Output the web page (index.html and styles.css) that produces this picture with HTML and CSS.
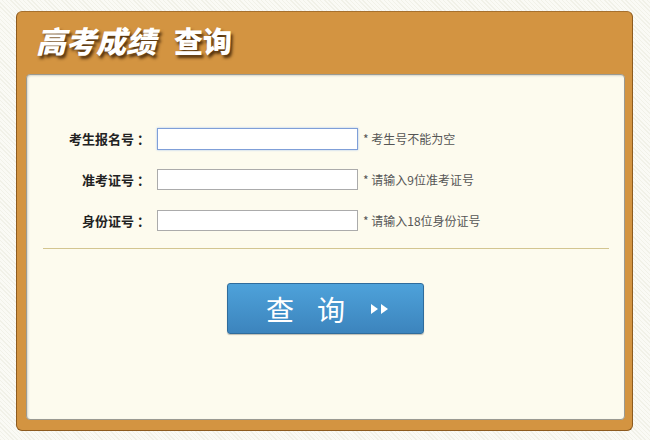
FILE: index.html
```html
<!DOCTYPE html>
<html lang="zh-CN">
<head>
  <meta charset="UTF-8">
  <title>高考成绩查询</title>
  <link rel="stylesheet" href="styles.css">
</head>
<body>
  <div class="panel">
    <div class="panel-head">
      <h1 class="title">高考成绩<span class="title-sub">查询</span></h1>
    </div>
    <div class="panel-body">
      <form class="query-form">
        <div class="form-row">
          <label for="ksh">考生报名号<span class="colon">：</span></label>
          <input type="text" id="ksh" class="field field-focus">
          <span class="hint">* 考生号不能为空</span>
        </div>
        <div class="form-row">
          <label for="zkzh">准考证号<span class="colon">：</span></label>
          <input type="text" id="zkzh" class="field">
          <span class="hint">* 请输入9位准考证号</span>
        </div>
        <div class="form-row">
          <label for="sfzh">身份证号<span class="colon">：</span></label>
          <input type="text" id="sfzh" class="field">
          <span class="hint">* 请输入18位身份证号</span>
        </div>
        <div class="divider"></div>
        <div class="actions">
          <button type="button" class="btn-query">
            <span class="btn-char">查</span>
            <span class="btn-char btn-char-2">询</span>
            <svg class="btn-arrows" width="22" height="14" viewBox="0 0 22 14">
              <path d="M2 2 L9 7 L2 12 Z" fill="#fff"/>
              <path d="M12 2 L19 7 L12 12 Z" fill="#fff"/>
            </svg>
          </button>
        </div>
      </form>
    </div>
  </div>
</body>
</html>
```

FILE: styles.css
```css
body {
  margin: 0;
  padding: 11px 0 0 16px;
  height: 440px;
  box-sizing: border-box;
  font-family: "Noto Sans CJK SC", "Liberation Sans", sans-serif;
  background-color: #f7f7f0;
  background-image: repeating-linear-gradient(45deg, #f1f1e8 0 1px, #fafaf5 1px 3px);
}

.panel {
  width: 617px;
  height: 420px;
  box-sizing: border-box;
  background-color: #d39441;
  border: 1px solid #8d5b1f;
  border-top-color: #a5702e;
  border-radius: 6px;
  padding: 0 7px 10px 9px;
}

.panel-head {
  height: 62px;
}

.title {
  margin: 0;
  padding: 8px 0 0 10px;
  font-size: 30px;
  line-height: 40px;
  font-weight: 900;
  font-style: italic;
  color: #fff;
  text-shadow: 2px 3px 3px rgba(50, 25, 0, 0.8);
}

.title-sub {
  margin-left: 18px;
  font-style: normal;
  font-size: 29px;
}

.panel-body {
  height: 346px;
  box-sizing: border-box;
  background-color: #fdfbee;
  border: 1px solid #9a9a92;
  border-radius: 4px;
  box-shadow: inset 1px 1px 2px rgba(0, 0, 0, 0.15);
  padding-top: 43px;
}

.form-row {
  display: flex;
  align-items: center;
  height: 41px;
}

.form-row label {
  width: 123px;
  text-align: right;
  font-size: 13px;
  font-weight: bold;
  color: #222;
  margin-right: 7px;
}

.colon {
  margin-left: 3px;
}

.field {
  width: 201px;
  height: 21px;
  box-sizing: border-box;
  border: 1px solid #ababab;
  background: #fff;
  margin: 0 5px 0 0;
  padding: 0 4px;
  outline: none;
}

.field-focus {
  height: 22px;
  border: 1px solid #7f9fd8;
  box-shadow: 0 0 2px #a8c4f0;
}

.hint {
  font-size: 12px;
  color: #555;
}

.divider {
  height: 1px;
  background-color: #d3c590;
  margin: 7px 15px 0 16px;
}

.actions {
  display: flex;
  justify-content: center;
  padding-top: 34px;
}

.btn-query {
  width: 197px;
  height: 51px;
  display: flex;
  align-items: center;
  border: 1px solid #2f6c9c;
  border-radius: 3px;
  background: linear-gradient(#4ea2da, #3c84bd);
  box-shadow: 0 1px 1px rgba(0, 0, 0, 0.25);
  color: #fff;
  cursor: pointer;
  padding: 0 0 0 38px;
}

.btn-char {
  font-family: "Noto Sans CJK SC", sans-serif;
  font-size: 28px;
  line-height: 1;
}

.btn-char-2 {
  margin-left: 23px;
}

.btn-arrows {
  margin-left: 24px;
}
```
